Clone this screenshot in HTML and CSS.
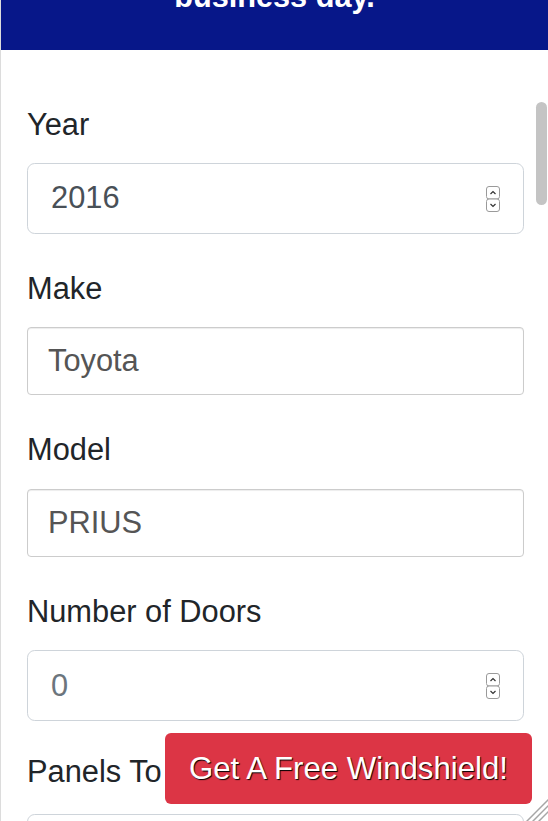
FILE: index.html
```html
<!DOCTYPE html>
<html lang="en">
<head>
<meta charset="utf-8">
<title>Free Windshield Quote</title>
<link rel="stylesheet" href="styles.css">
</head>
<body>
<div class="panel">
  <header class="panel-head">
    <h2 class="panel-title">business day.</h2>
  </header>
  <form class="quote-form">
    <div class="group">
      <label class="field-label" for="year">Year</label>
      <div class="spin-wrap">
        <input class="form-control" id="year" type="number" value="2016">
        <svg class="spinner" width="14" height="26" viewBox="0 0 14 26" aria-hidden="true">
          <rect x="0.5" y="0.5" width="13" height="12.5" rx="2.5" fill="#fff" stroke="#9a9a9a"/>
          <rect x="0.5" y="13" width="13" height="12.5" rx="2.5" fill="#fff" stroke="#9a9a9a"/>
          <path d="M4.5 8 L7 5.5 L9.5 8" fill="none" stroke="#333" stroke-width="1.2"/>
          <path d="M4.5 18 L7 20.5 L9.5 18" fill="none" stroke="#333" stroke-width="1.2"/>
        </svg>
      </div>
    </div>
    <div class="group">
      <label class="field-label" for="make">Make</label>
      <input class="text-input" id="make" type="text" value="Toyota">
    </div>
    <div class="group">
      <label class="field-label" for="model">Model</label>
      <input class="text-input" id="model" type="text" value="PRIUS">
    </div>
    <div class="group group-doors">
      <label class="field-label" for="doors">Number of Doors</label>
      <div class="spin-wrap">
        <input class="form-control" id="doors" type="number" placeholder="0">
        <svg class="spinner" width="14" height="26" viewBox="0 0 14 26" aria-hidden="true">
          <rect x="0.5" y="0.5" width="13" height="12.5" rx="2.5" fill="#fff" stroke="#9a9a9a"/>
          <rect x="0.5" y="13" width="13" height="12.5" rx="2.5" fill="#fff" stroke="#9a9a9a"/>
          <path d="M4.5 8 L7 5.5 L9.5 8" fill="none" stroke="#333" stroke-width="1.2"/>
          <path d="M4.5 18 L7 20.5 L9.5 18" fill="none" stroke="#333" stroke-width="1.2"/>
        </svg>
      </div>
    </div>
    <div class="group">
      <label class="field-label field-label-panels" for="panels">Panels To Be Replaced</label>
      <textarea class="form-area" id="panels"></textarea>
    </div>
  </form>
  <div class="scroll-thumb"></div>
</div>
<button class="cta" type="button">Get A Free Windshield!</button>
<svg class="grip" width="22" height="22" viewBox="0 0 22 22" aria-hidden="true">
  <line x1="22.5" y1="0.5" x2="0.5" y2="22.5" stroke="#a6a6a6" stroke-width="1.5"/>
  <line x1="22.5" y1="6.5" x2="6.5" y2="22.5" stroke="#a6a6a6" stroke-width="1.5"/>
  <line x1="22.5" y1="12.5" x2="12.5" y2="22.5" stroke="#a6a6a6" stroke-width="1.5"/>
</svg>
</body>
</html>
```

FILE: styles.css
```css
html, body {
  margin: 0;
  padding: 0;
  height: 100%;
  overflow: hidden;
  background: #fff;
}

body {
  font-family: "Liberation Sans", Arial, Helvetica, sans-serif;
  font-size: 30.8px;
  color: #212529;
}

.panel {
  position: relative;
  height: 100vh;
  overflow: hidden;
  border-left: 1px solid #dcdcdc;
  box-sizing: border-box;
}

.panel-head {
  background: #071789;
  height: 50px;
  overflow: hidden;
  display: flex;
  flex-direction: column;
  align-items: center;
}

.panel-title {
  margin: -21px 0 0;
  font-size: 30.7px;
  line-height: 36.8px;
  font-weight: 700;
  color: #fff;
  text-align: center;
}

.quote-form {
  padding: 51.6px 24px 0 26px;
}

.group {
  display: flex;
  flex-direction: column;
  margin-bottom: 32px;
}

.group-doors {
  margin-bottom: 27.6px;
}

.field-label {
  font-size: 30.8px;
  line-height: 46.05px;
  margin-bottom: 15.35px;
  color: #212529;
}

.field-label-panels {
  margin-bottom: 19.6px;
}

.spin-wrap {
  position: relative;
}

.spinner {
  position: absolute;
  right: 24px;
  top: 23px;
}

.form-control {
  box-sizing: border-box;
  height: 71px;
  width: 100%;
  padding: 0 23px;
  font-family: inherit;
  font-size: 30.8px;
  line-height: 46px;
  color: #495057;
  background: #fff;
  border: 1px solid #ced4da;
  border-radius: 7.7px;
  outline: none;
  margin: 0;
  -moz-appearance: textfield;
}

.form-control::-webkit-inner-spin-button,
.form-control::-webkit-outer-spin-button {
  -webkit-appearance: none;
  margin: 0;
}

.form-control::placeholder {
  color: #6c757d;
  opacity: 1;
}

.text-input {
  box-sizing: border-box;
  height: 68px;
  width: 100%;
  padding: 0 20px;
  font-family: inherit;
  font-size: 30.8px;
  color: #555;
  background: #fff;
  border: 1px solid #ccc;
  border-radius: 4px;
  box-shadow: inset 0 1px 1px rgba(0, 0, 0, 0.075);
  outline: none;
  margin: 0;
}

.form-area {
  box-sizing: border-box;
  width: 100%;
  height: 160px;
  padding: 12px 23px;
  font-family: inherit;
  font-size: 30.8px;
  color: #495057;
  background: #fff;
  border: 1px solid #ced4da;
  border-radius: 7.7px;
  resize: none;
  overflow-y: scroll;
  margin: 0;
}

.form-area::-webkit-scrollbar {
  width: 11px;
}

.form-area::-webkit-scrollbar-track {
  background: #fff;
}

.form-area::-webkit-scrollbar-thumb {
  background: #c8c8c8;
}

.scroll-thumb {
  position: absolute;
  left: 535px;
  top: 102px;
  width: 11px;
  height: 103px;
  border-radius: 6px;
  background: #c4c4c4;
}

.cta {
  position: fixed;
  left: 165px;
  top: 733px;
  width: 367px;
  height: 71px;
  margin: 0;
  padding: 0;
  border: 0;
  border-radius: 6px;
  background: #dc3545;
  color: #fff;
  font-family: "Liberation Sans", Arial, Helvetica, sans-serif;
  font-size: 31.2px;
  line-height: 71px;
  text-align: center;
  text-shadow: 1px 1px 1px #000;
  cursor: pointer;
}

.grip {
  position: fixed;
  right: 0;
  bottom: 0;
}
```
